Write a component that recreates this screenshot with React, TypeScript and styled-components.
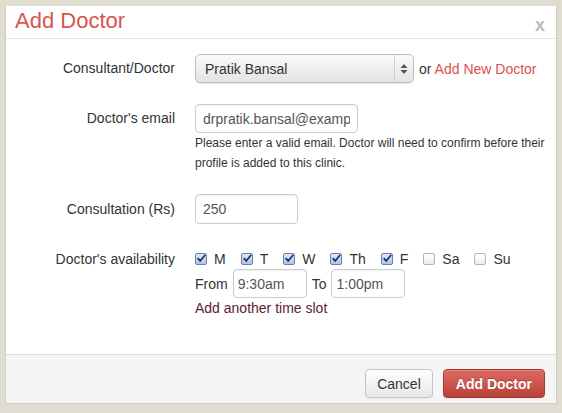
import React from "react";
import styled, { createGlobalStyle } from "styled-components";

const GlobalStyle = createGlobalStyle`
  html, body {
    margin: 0;
    padding: 0;
    background: #e0dcd0;
    font-family: "Liberation Sans", Arial, sans-serif;
    font-size: 14px;
    color: #333;
  }
`;

const days = [
  { label: "M", checked: true },
  { label: "T", checked: true },
  { label: "W", checked: true },
  { label: "Th", checked: true },
  { label: "F", checked: true },
  { label: "Sa", checked: false },
  { label: "Su", checked: false },
];

const Check = ({ checked }: { checked: boolean }) =>
  checked ? (
    <CheckBox checked>
      <svg width="12" height="12" viewBox="0 0 12 12">
        <path
          d="M2.6 5.6 L5 8.4 L10.6 1.6"
          fill="none"
          stroke="#1e2b57"
          strokeWidth="2"
          strokeLinecap="round"
          strokeLinejoin="round"
        />
      </svg>
    </CheckBox>
  ) : (
    <CheckBox checked={false} />
  );

const App = () => {
  return (
    <>
      <GlobalStyle />
      <Page>
        <Modal>
          <Header>
            <Title>Add Doctor</Title>
            <Close>x</Close>
          </Header>
          <Body>
            <Row>
              <Label>Consultant/Doctor</Label>
              <Inline>
                <Select>
                  <span>Pratik Bansal</span>
                  <SelectArrows>
                    <svg width="8" height="12" viewBox="0 0 8 12">
                      <path d="M4 1 L7.5 5 L0.5 5 Z" fill="#555" />
                      <path d="M4 11 L7.5 7 L0.5 7 Z" fill="#555" />
                    </svg>
                  </SelectArrows>
                </Select>
                <Or>
                  or <RedLink href="#">Add New Doctor</RedLink>
                </Or>
              </Inline>
            </Row>
            <Row>
              <Label>Doctor's email</Label>
              <div>
                <TextInput width={163} value="drpratik.bansal@example.com" readOnly />
                <Help>
                  Please enter a valid email. Doctor will need to confirm before their
                  profile is added to this clinic.
                </Help>
              </div>
            </Row>
            <Row>
              <Label tall>Consultation (Rs)</Label>
              <TextInput width={103} tall value="250" readOnly />
            </Row>
            <Row spaced>
              <Label line>Doctor's availability</Label>
              <div>
                <Days>
                  {days.map((d) => (
                    <Day key={d.label}>
                      <Check checked={d.checked} />
                      {d.label}
                    </Day>
                  ))}
                </Days>
                <TimeRow>
                  From
                  <TextInput width={74} small value="9:30am" readOnly />
                  To
                  <TextInput width={74} small value="1:00pm" readOnly />
                </TimeRow>
                <SlotLink href="#">Add another time slot</SlotLink>
              </div>
            </Row>
          </Body>
          <Footer>
            <Button>Cancel</Button>
            <Button primary>Add Doctor</Button>
          </Footer>
        </Modal>
      </Page>
    </>
  );
};

export default App;

const Page = styled.div`
  padding: 6px 5px 0 5px;
`;

const Modal = styled.div`
  width: 552px;
  box-sizing: border-box;
  background: #fff;
  border: 1px solid #d2cec3;
  border-top: none;
`;

const Header = styled.div`
  display: flex;
  align-items: center;
  justify-content: space-between;
  height: 32px;
  padding: 0 11px 0 9px;
  border-bottom: 1px solid #e6e6e6;
`;

const Title = styled.h3`
  margin: 0;
  font-size: 22px;
  font-weight: normal;
  color: #d9534f;
  line-height: 26px;
  margin-top: -3px;
`;

const Close = styled.span`
  font-size: 18px;
  font-weight: bold;
  color: #bdbdbd;
  line-height: 20px;
  margin-top: 5px;
`;

const Body = styled.div`
  display: flex;
  flex-direction: column;
  gap: 21px;
  padding: 15px 0 36px 0;
`;

const Row = styled.div<{ spaced?: boolean }>`
  display: grid;
  grid-template-columns: 169px 1fr;
  column-gap: 20px;
  margin-top: ${(p) => (p.spaced ? "4px" : "0")};
`;

const Label = styled.label<{ tall?: boolean; line?: boolean }>`
  text-align: right;
  line-height: ${(p) => (p.line ? "20px" : p.tall ? "30px" : "29px")};
`;

const Inline = styled.div`
  display: flex;
  align-items: center;
`;

const Select = styled.div`
  display: flex;
  align-items: center;
  justify-content: space-between;
  width: 219px;
  height: 29px;
  box-sizing: border-box;
  padding-left: 9px;
  border: 1px solid #bcbcbc;
  border-radius: 5px;
  background: linear-gradient(#fafafa, #e4e4e4);
  color: #333;
  box-shadow: 0 1px 1px rgba(0, 0, 0, 0.08);
`;

const SelectArrows = styled.div`
  display: flex;
  align-items: center;
  justify-content: center;
  width: 18px;
  height: 100%;
  border-left: 1px solid #cfcfcf;
`;

const Or = styled.span`
  margin-left: 5px;
  color: #333;
`;

const RedLink = styled.a`
  color: #d9534f;
  text-decoration: none;
`;

const TextInput = styled.input<{ width: number; tall?: boolean; small?: boolean }>`
  width: ${(p) => p.width}px;
  height: ${(p) => (p.tall ? 30 : 29)}px;
  box-sizing: border-box;
  padding: 0 ${(p) => (p.small ? 4 : 7)}px;
  border: 1px solid #ccc;
  border-radius: 4px;
  font-family: inherit;
  font-size: 14px;
  color: #555;
  background: #fff;
  outline: none;
  box-shadow: inset 0 1px 1px rgba(0, 0, 0, 0.05);
`;

const Help = styled.p`
  margin: 0;
  font-size: 12px;
  line-height: 20px;
  color: #333;
  max-width: 352px;
`;

const Days = styled.div`
  display: flex;
  align-items: center;
  height: 20px;
  gap: 15px;
`;

const Day = styled.span`
  display: inline-flex;
  align-items: center;
  gap: 7px;
`;

const CheckBox = styled.span<{ checked: boolean }>`
  display: inline-flex;
  align-items: center;
  justify-content: center;
  width: 12px;
  height: 12px;
  box-sizing: border-box;
  border-radius: 2px;
  border: 1px solid ${(p) => (p.checked ? "#6d7fa8" : "#b4b4b4")};
  background: ${(p) =>
    p.checked ? "linear-gradient(#dbe8fa, #a9c6ee)" : "linear-gradient(#fff, #ececec)"};
  svg {
    margin-top: -1px;
  }
`;

const TimeRow = styled.div`
  display: flex;
  align-items: center;
  gap: 4px;
  height: 29px;

  input {
    margin: 0 1px;
  }
`;

const SlotLink = styled.a`
  display: block;
  line-height: 20px;
  color: #5b2133;
  text-decoration: none;
`;

const Footer = styled.div`
  display: flex;
  justify-content: flex-end;
  gap: 10px;
  padding: 14px 11px 5px;
  height: 49px;
  box-sizing: border-box;
  background: #f5f5f5;
  border-top: 1px solid #ddd;
`;

const Button = styled.button<{ primary?: boolean }>`
  height: 29px;
  padding: 0 ${(p) => (p.primary ? "12px" : "11px")};
  border-radius: 4px;
  font-family: inherit;
  font-size: 14px;
  font-weight: ${(p) => (p.primary ? "bold" : "normal")};
  color: ${(p) => (p.primary ? "#fff" : "#333")};
  border: 1px solid ${(p) => (p.primary ? "#a8382f" : "#c5c5c5")};
  background: ${(p) =>
    p.primary ? "linear-gradient(#dd6a60, #b8423a)" : "linear-gradient(#ffffff, #e6e6e6)"};
  text-shadow: ${(p) => (p.primary ? "0 -1px 0 rgba(0,0,0,0.25)" : "0 1px 1px rgba(255,255,255,0.75)")};
  box-shadow: inset 0 1px 0 rgba(255, 255, 255, 0.2), 0 1px 2px rgba(0, 0, 0, 0.05);
`;
